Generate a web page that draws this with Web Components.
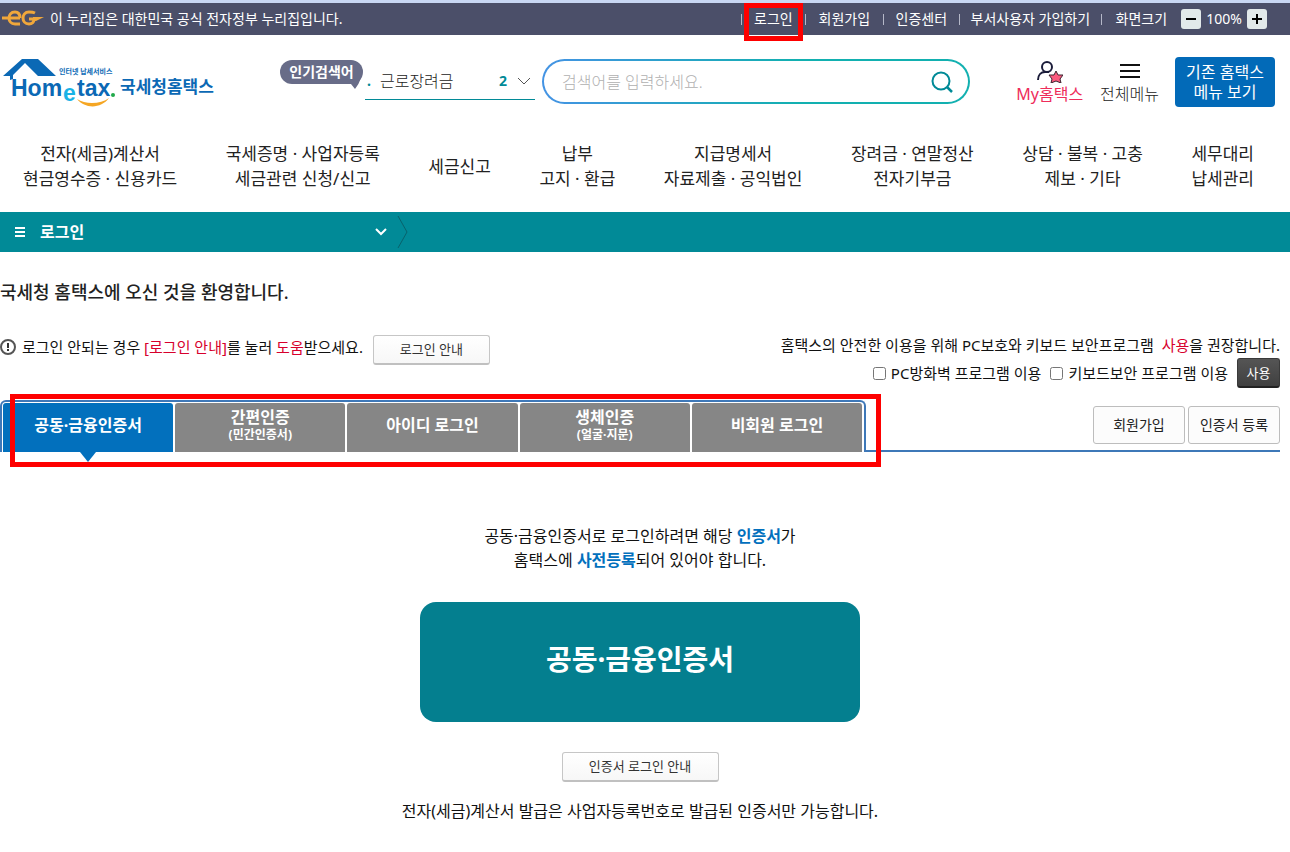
<!DOCTYPE html>
<html lang="ko">
<head>
<meta charset="utf-8">
<meta name="viewport" content="width=device-width, initial-scale=1">
<title>국세청 홈택스</title>
<style>
	body {
		margin: 0;
		background: #ffffff;
		color: #111111;
		font-family: "Noto Sans", "Noto Sans CJK KR", sans-serif;
		font-size: 15px;
		line-height: 24px;
	}
</style>
</head>
<body>
<top-bar></top-bar>
<site-header></site-header>
<main-nav></main-nav>
<location-bar>로그인</location-bar>
<main>
	<login-notice>국세청 홈택스에 오신 것을 환영합니다.</login-notice>
	<login-tabs></login-tabs>
	<login-panel>
		<span slot="title">공동·금융인증서</span>
		<span slot="footnote">전자(세금)계산서 발급은 사업자등록번호로 발급된 인증서만 가능합니다.</span>
	</login-panel>
</main>

<script>
class PlainButton extends HTMLElement {
	constructor() {
		super();
		this.attachShadow({ mode: 'open' });
	}

	connectedCallback() {
		this.shadowRoot.innerHTML = `
			<style>
				:host { display: inline-block; width: 117px; height: 30px; }
				:host([size="wide"]) { width: 157px; }
				:host([size="tall"]) { width: 92px; height: 38px; }
				:host([size="dark"]) { width: 43px; }
				button {
					display: block;
					box-sizing: border-box;
					width: 100%;
					height: 100%;
					padding: 0 0 2px;
					border: 1px solid #c6c6c6;
					border-bottom: 2px solid #c0c0c0;
					border-radius: 3px;
					background: linear-gradient(#ffffff, #f7f7f7);
					color: #333333;
					font: inherit;
					font-size: 13px;
					line-height: 20px;
					white-space: nowrap;
				}
				:host([size="tall"]) button {
					padding: 0;
					border: 1px solid #bdbdbd;
					background: #fcfcfc;
					color: #222222;
					font-size: 14px;
				}
				:host([size="dark"]) button {
					padding: 0;
					border: 1px solid #3a3a3a;
					border-bottom: 2px solid #222222;
					background: linear-gradient(#555555, #404040);
					color: #ffffff;
				}
			</style>
			<button type="button"><slot></slot></button>
		`;
	}
}

class TopBar extends HTMLElement {
	constructor() {
		super();
		this.attachShadow({ mode: 'open' });
	}

	connectedCallback() {
		const links = ['로그인', '회원가입', '인증센터', '부서사용자 가입하기', '화면크기'];

		this.shadowRoot.innerHTML = `
			<style>
				:host {
					display: flex;
					align-items: center;
					box-sizing: border-box;
					height: 35px;
					padding: 0 23px 0 2px;
					border-top: 3px solid #c8d7f3;
					background: #4b4f69;
					color: #ffffff;
					font-size: 14px;
					line-height: 20px;
				}
				.emblem { width: 42px; height: 20px; margin-right: 6px; }
				.intro { flex: 1; }
				nav { display: grid; grid-template-columns: 64px 78px 76px 142px 80px; }
				nav a {
					position: relative;
					color: inherit;
					text-align: center;
					text-decoration: none;
					white-space: nowrap;
				}
				nav a::before {
					content: "";
					position: absolute;
					left: 0;
					top: 5px;
					height: 11px;
					border-left: 1px solid #b5b8c8;
				}
				.mark {
					position: absolute;
					left: 3px;
					top: -6px;
					z-index: 1;
					box-sizing: border-box;
					width: 59px;
					height: 38px;
					border: 5px solid #fe0000;
				}
				.zoom { display: flex; align-items: center; gap: 5px; }
				.zoom button {
					width: 20px;
					height: 20px;
					padding: 0;
					border: 0;
					border-radius: 3px;
					background: #e2e9ea;
				}
				.zoom svg { display: block; margin: auto; }
			</style>
			<svg class="emblem" viewBox="0 0 42 20">
				<g fill="none" stroke="#f0a73b" stroke-width="3">
					<path d="M0 9h18"/>
					<path d="M18 9c0-4-2-6-5-6-4 0-6 3-6 6s2 6 6 6h5"/>
					<path d="M33 4c-2-1-4-1-6-1-4 0-6 3-6 6s2 6 6 6c3 0 5-2 5-5h-5"/>
				</g>
				<path d="M31 8h11l-8 4h-3z" fill="#f0a73b"/>
			</svg>
			<span class="intro">이 누리집은 대한민국 공식 전자정부 누리집입니다.</span>
			<nav>
				${links.map((text, i) => `<a href="#">${text}${i === 0 ? '<span class="mark"></span>' : ''}</a>`).join('')}
			</nav>
			<div class="zoom">
				<button type="button" aria-label="축소"><svg width="12" height="12"><path d="M1 6h10" stroke="#000" stroke-width="2"/></svg></button>
				<span>100%</span>
				<button type="button" aria-label="확대"><svg width="12" height="12"><path d="M1 6h10M6 1v10" stroke="#000" stroke-width="2"/></svg></button>
			</div>
		`;
	}
}

class HometaxLogo extends HTMLElement {
	constructor() {
		super();
		this.attachShadow({ mode: 'open' });
	}

	connectedCallback() {
		this.shadowRoot.innerHTML = `
			<style>
				:host { display: block; width: 220px; height: 50px; }
				svg { display: block; }
				text { font-weight: 700; fill: #0b69b5; }
				.latin { font-family: "Liberation Sans", sans-serif; font-size: 23px; }
			</style>
			<svg width="220" height="50" viewBox="0 0 220 50">
				<path d="M22 2h16l18 17H38L25 6 13 18v4l-3 1v-4H3z" fill="#0b69b5"/>
				<text x="59" y="17" font-size="7">인터넷 납세서비스</text>
				<text class="latin" x="11" y="39">Hom</text>
				<text class="latin" x="63" y="44" style="fill:#19b3e6">e</text>
				<text class="latin" x="77" y="39">tax</text>
				<circle cx="113" cy="38" r="2" fill="#22a94a"/>
				<path d="M77 42c8 10 24 10 32-1-8 6-23 7-32 1z" fill="#f5a623"/>
				<text x="120" y="36" font-size="17">국세청홈택스</text>
			</svg>
		`;
	}
}

class SiteHeader extends HTMLElement {
	constructor() {
		super();
		this.attachShadow({ mode: 'open' });
	}

	connectedCallback() {
		this.shadowRoot.innerHTML = `
			<style>
				:host {
					display: flex;
					align-items: flex-start;
					padding: 22px 15px 0 0;
					font-size: 16px;
					line-height: 20px;
				}
				hometax-logo { margin-right: 60px; }
				.badge {
					position: relative;
					width: 83px;
					margin: 3px 2px 0 0;
					border-radius: 12px;
					background: #686c88;
					color: #ffffff;
					font-size: 14px;
					font-weight: 700;
					line-height: 24px;
					text-align: center;
					white-space: nowrap;
				}
				.badge svg { position: absolute; right: 2px; top: 18px; }
				.keyword {
					display: flex;
					align-items: center;
					box-sizing: border-box;
					width: 170px;
					height: 43px;
					padding: 6px 4px 0 2px;
					border-bottom: 1px solid #018a97;
					margin-right: 7px;
				}
				.keyword b { color: #018a97; font-size: 14px; }
				.keyword select {
					flex: 1;
					appearance: none;
					margin: 0 0 0 9px;
					padding: 0;
					border: 0;
					background: none;
					color: #222222;
					font: inherit;
					font-weight: 300;
				}
				.keyword svg { margin-left: 10px; }
				.search {
					display: flex;
					align-items: center;
					flex: 1;
					box-sizing: border-box;
					height: 45px;
					margin: 2px 46px 0 0;
					padding: 0 15px 0 18px;
					border: 2px solid transparent;
					border-radius: 23px;
					background:
						linear-gradient(#ffffff, #ffffff) padding-box,
						linear-gradient(90deg, #4493e4, #12b0b0 60%) border-box;
				}
				.search input {
					flex: 1;
					min-width: 0;
					padding: 0;
					border: 0;
					outline: 0;
					background: none;
					font: inherit;
					font-weight: 300;
				}
				.search input::placeholder { color: #b0b0b0; }
				.search button { padding: 0; border: 0; background: none; }
				.search svg { display: block; }
				.tool {
					display: flex;
					flex-direction: column;
					align-items: center;
					margin-right: 17px;
					padding-top: 4px;
					color: #222222;
					text-decoration: none;
					white-space: nowrap;
				}
				.tool svg { margin-bottom: 1px; }
				.my { color: #ee2d5b; }
				.old {
					width: 100px;
					height: 50px;
					padding: 0;
					border: 0;
					border-radius: 4px;
					background: #026ab8;
					color: #ffffff;
					font: inherit;
					white-space: nowrap;
				}
				.all { margin-right: 16px; font-weight: 300; }
			</style>
			<hometax-logo></hometax-logo>
			<div class="badge">인기검색어<svg width="14" height="12"><path d="M0 4L14 0Q12 6 8 11L4 6z" fill="#686c88"/></svg></div>
			<div class="keyword">
				<b>.</b>
				<select aria-label="인기검색어"><option>근로장려금</option></select>
				<b>2</b>
				<svg width="14" height="8"><path d="M1 1l6 6 6-6" fill="none" stroke="#555" stroke-width="1"/></svg>
			</div>
			<form class="search">
				<input type="text" placeholder="검색어를 입력하세요." aria-label="검색어">
				<button type="button" aria-label="검색"><svg width="22" height="22"><path d="M16 16l5 5" stroke="#018a97" stroke-width="2.5"/><circle cx="10" cy="10" r="8.5" fill="none" stroke="#018a97" stroke-width="2"/></svg></button>
			</form>
			<a class="tool my" href="#">
				<svg width="26" height="22" viewBox="0 0 26 22">
					<circle cx="10" cy="6" r="5" fill="none" stroke="#1b1c3a" stroke-width="2"/>
					<path d="M1 19c0-5 3-8 7-8h4" fill="none" stroke="#1b1c3a" stroke-width="2"/>
					<path d="M19 10l2 4 5 0-3 4 1 4-5-2-5 2 1-4-3-4 5 0z" fill="#fa5a7d" stroke="#3b2430" stroke-width="1"/>
				</svg>
				<span>My홈택스</span>
			</a>
			<a class="tool all" href="#">
				<svg width="20" height="22"><path d="M0 4h20M0 10h20M0 16h20" stroke="#111" stroke-width="2"/></svg>
				<span>전체메뉴</span>
			</a>
			<button class="old" type="button">기존 홈택스<br>메뉴 보기</button>
		`;
	}
}

class MainNav extends HTMLElement {
	constructor() {
		super();
		this.attachShadow({ mode: 'open' });
	}

	connectedCallback() {
		const menus = [
			['전자(세금)계산서', '현금영수증 · 신용카드'],
			['국세증명 · 사업자등록', '세금관련 신청/신고'],
			['세금신고'],
			['납부', '고지 · 환급'],
			['지급명세서', '자료제출 · 공익법인'],
			['장려금 · 연말정산', '전자기부금'],
			['상담 · 불복 · 고충', '제보 · 기타'],
			['세무대리', '납세관리']
		];

		this.shadowRoot.innerHTML = `
			<style>
				:host { display: block; padding: 34px 36px 21px 23px; }
				nav { display: flex; align-items: center; justify-content: space-between; }
				a {
					color: #222222;
					font-size: 17px;
					line-height: 25px;
					text-align: center;
					text-decoration: none;
					white-space: nowrap;
				}
			</style>
			<nav>${menus.map(lines => `<a href="#">${lines.join('<br>')}</a>`).join('')}</nav>
		`;
	}
}

class LocationBar extends HTMLElement {
	constructor() {
		super();
		this.attachShadow({ mode: 'open' });
	}

	connectedCallback() {
		this.shadowRoot.innerHTML = `
			<style>
				:host {
					display: flex;
					align-items: center;
					height: 40px;
					padding-left: 15px;
					background: #018a97;
					color: #ffffff;
					font-size: 16px;
					font-weight: 700;
				}
				button {
					display: flex;
					align-items: center;
					width: 372px;
					padding: 0;
					border: 0;
					background: none;
					color: inherit;
					font: inherit;
				}
				.label { flex: 1; margin-left: 15px; text-align: left; }
				.next { margin-left: 10px; }
			</style>
			<button type="button">
				<svg width="10" height="10"><path d="M0 1h10M0 5h10M0 9h10" stroke="#fff" stroke-width="2"/></svg>
				<span class="label"><slot></slot></span>
				<svg width="12" height="8"><path d="M1 1l5 5 5-5" fill="none" stroke="#fff" stroke-width="2"/></svg>
			</button>
			<svg class="next" width="12" height="34"><path d="M1 1l9 16-9 16" fill="none" stroke="#08626c" stroke-width="1"/></svg>
		`;
	}
}

class LoginNotice extends HTMLElement {
	constructor() {
		super();
		this.attachShadow({ mode: 'open' });
	}

	connectedCallback() {
		this.shadowRoot.innerHTML = `
			<style>
				:host { display: block; padding: 28px 10px 12px 0; }
				h1 { margin: 0 0 26px; color: #222222; font-size: 18px; font-weight: 500; line-height: 24px; }
				.row { display: flex; align-items: flex-start; justify-content: space-between; }
				.help { display: flex; align-items: flex-start; gap: 10px; padding-top: 5px; }
				.help p, .security p { margin: 0; }
				.text { display: flex; align-items: center; gap: 5px; }
				em { color: #d7002c; font-style: normal; }
				.security p { padding-top: 3px; text-align: right; white-space: pre; }
				.options { display: flex; align-items: center; justify-content: flex-end; margin-top: 1px; }
				label { display: flex; align-items: center; gap: 5px; margin-right: 9px; }
				input { width: 13px; height: 13px; margin: 0; }
			</style>
			<h1><slot></slot></h1>
			<div class="row">
				<div class="help">
					<div class="text">
						<svg width="17" height="17"><circle cx="8" cy="8" r="7" fill="none" stroke="#555" stroke-width="2"/><path d="M8 4v5M8 10v2" stroke="#333" stroke-width="2"/></svg>
						<p>로그인 안되는 경우 <em>[로그인 안내]</em>를 눌러 <em>도움</em>받으세요.</p>
					</div>
					<plain-button>로그인 안내</plain-button>
				</div>
				<div class="security">
					<p>홈택스의 안전한 이용을 위해 PC보호와 키보드 보안프로그램  <em>사용</em>을 권장합니다.</p>
					<div class="options">
						<label><input type="checkbox">PC방화벽 프로그램 이용</label>
						<label><input type="checkbox">키보드보안 프로그램 이용</label>
						<plain-button size="dark">사용</plain-button>
					</div>
				</div>
			</div>
		`;
	}
}

class LoginTabs extends HTMLElement {
	constructor() {
		super();
		this.attachShadow({ mode: 'open' });
	}

	connectedCallback() {
		const tabs = [
			['공동·금융인증서'],
			['간편인증', '(민간인증서)'],
			['아이디 로그인'],
			['생체인증', '(얼굴·지문)'],
			['비회원 로그인']
		];

		this.shadowRoot.innerHTML = `
			<style>
				:host { position: relative; display: flex; height: 52px; padding-right: 10px; }
				.tabs {
					display: grid;
					grid-template-columns: repeat(5, 1fr);
					gap: 2px;
					box-sizing: border-box;
					width: 866px;
					padding: 1px 2px 0 1px;
					border: 2px solid #3e78b8;
					border-bottom: 0;
					border-radius: 6px 6px 0 0;
				}
				.tabs button {
					position: relative;
					padding: 0 0 6px;
					border: 0;
					border-radius: 3px 3px 0 0;
					background: #868686;
					color: #ffffff;
					font: inherit;
					font-size: 16px;
					font-weight: 700;
					line-height: 20px;
				}
				.tabs small { display: block; font-size: 12px; line-height: 16px; }
				.tabs button[aria-selected="true"] { background: #0270bd; }
				.tabs button[aria-selected="true"]::after {
					content: "";
					position: absolute;
					left: 50%;
					top: 100%;
					margin-left: -8px;
					border: 8px solid transparent;
					border-top: 10px solid #0270bd;
					border-bottom: 0;
				}
				.links {
					display: flex;
					flex: 1;
					justify-content: flex-end;
					gap: 3px;
					padding-top: 6px;
					border-bottom: 2px solid #3e78b8;
				}
				.mark {
					position: absolute;
					left: 10px;
					top: -6px;
					box-sizing: border-box;
					width: 871px;
					height: 73px;
					border: 5px solid #fe0000;
					pointer-events: none;
				}
			</style>
			<div class="tabs" role="tablist">
				${tabs.map(([name, sub], i) => `
					<button type="button" role="tab" aria-selected="${i === 0}">${name}${sub ? `<small>${sub}</small>` : ''}</button>
				`).join('')}
			</div>
			<div class="links">
				<plain-button size="tall">회원가입</plain-button>
				<plain-button size="tall">인증서 등록</plain-button>
			</div>
			<div class="mark"></div>
		`;
	}
}

class LoginPanel extends HTMLElement {
	constructor() {
		super();
		this.attachShadow({ mode: 'open' });
	}

	connectedCallback() {
		this.shadowRoot.innerHTML = `
			<style>
				:host {
					display: flex;
					flex-direction: column;
					align-items: center;
					padding: 72px 10px 29px 0;
					font-size: 16px;
					text-align: center;
				}
				p { margin: 0; }
				strong { color: #0270bd; }
				.login {
					width: 440px;
					height: 120px;
					margin: 30px 0;
					padding: 0 0 6px;
					border: 0;
					border-radius: 16px;
					background: #047f8f;
					color: #ffffff;
					font: inherit;
					font-size: 28px;
					font-weight: 700;
				}
				plain-button { margin-bottom: 17px; }
			</style>
			<p>공동·금융인증서로 로그인하려면 해당 <strong>인증서</strong>가<br>홈택스에 <strong>사전등록</strong>되어 있어야 합니다.</p>
			<button class="login" type="button"><slot name="title"></slot></button>
			<plain-button size="wide">인증서 로그인 안내</plain-button>
			<p><slot name="footnote"></slot></p>
		`;
	}
}

customElements.define('plain-button', PlainButton);
customElements.define('top-bar', TopBar);
customElements.define('hometax-logo', HometaxLogo);
customElements.define('site-header', SiteHeader);
customElements.define('main-nav', MainNav);
customElements.define('location-bar', LocationBar);
customElements.define('login-notice', LoginNotice);
customElements.define('login-tabs', LoginTabs);
customElements.define('login-panel', LoginPanel);
</script>
</body>
</html>
